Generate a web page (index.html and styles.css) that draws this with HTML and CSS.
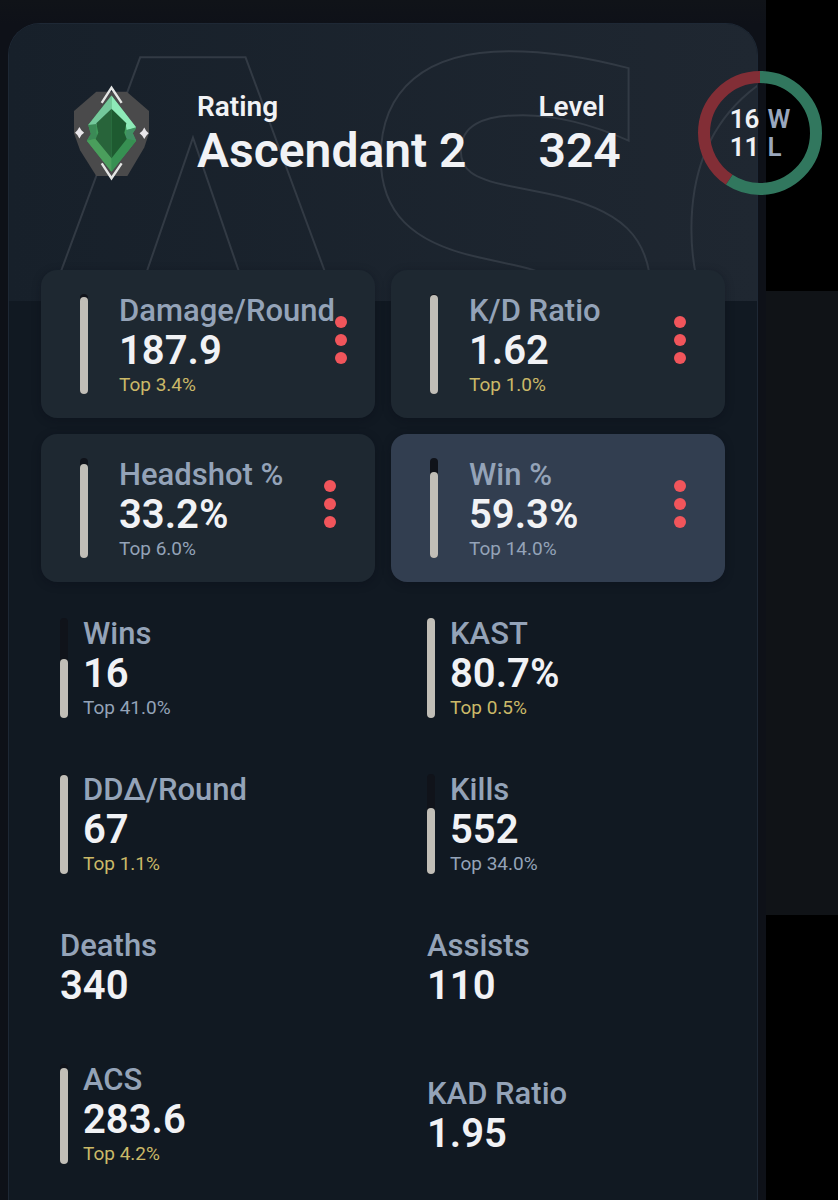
FILE: index.html
```
<!DOCTYPE html>
<html lang="en">
<head>
    <meta charset="utf-8">
    <meta name="viewport" content="width=device-width, initial-scale=1">
    <title>Player Stats</title>
    <link rel="stylesheet" href="styles.css">
</head>
<body>

<main class="profile">
    <section class="card">
        <!-- Large outlined rank name behind the header -->
        <div class="banner">
            <svg class="banner-text" width="1400" height="278" aria-hidden="true">
                <text x="2 338 659" y="376">ASC</text>
            </svg>
        </div>

        <header class="card-header">
            <svg class="rank-icon" viewBox="42 48 222 282" role="img" aria-label="Ascendant rank">
                <path fill="#4a4a4b" d="M108 67H198L264 124V190L250 232L200 316H108L60 240L42 190V124Z"/>
                <path fill="#3f9a5b" d="M153 78L226 174L216 190L226 212L153 304L80 212L92 192L84 165Z"/>
                <path fill="#74c89b" d="M153 78V120L108 167L84 165Z"/>
                <path fill="#8eeab8" d="M153 78L226 172L198 180L195 164L153 120Z"/>
                <path fill="#3b8a56" d="M84 165L108 162V188L112 205L80 212L92 192Z"/>
                <path fill="#419064" d="M198 180L226 174L216 190L226 212L194 207Z"/>
                <path fill="#4a9e5c" d="M80 212L108 205L153 262V304Z"/>
                <path fill="#379052" d="M226 212L196 205L153 262V304Z"/>
                <path fill="#28643a" d="M153 117L108 160L114 188L106 207L153 264Z"/>
                <path fill="#1e5a30" d="M153 117L197 160L191 188L198 207L153 264Z"/>
                <path fill="none" stroke="#e4e5e4" stroke-width="7" d="M124 100L153 55L183 100M124 279L153 323L183 279"/>
                <path fill="#e8e6ea" d="M58 171L64 181L72 188L64 195L58 205L52 195L45 188L52 181ZM250 173L256 183L263 190L256 197L250 207L244 197L236 190L244 183Z"/>
            </svg>
            <div class="headline">
                <span class="headline-label">Rating</span>
                <span class="headline-value">Ascendant 2</span>
            </div>
            <div class="headline">
                <span class="headline-label">Level</span>
                <span class="headline-value">324</span>
            </div>
            <div class="record">
                <svg class="record-ring" viewBox="0 0 124 124" aria-hidden="true">
                    <circle class="ring-loss" cx="62" cy="62" r="56" pathLength="27" stroke-dasharray="11 16" stroke-dashoffset="-16"/>
                    <circle class="ring-win" cx="62" cy="62" r="56" pathLength="27" stroke-dasharray="16 11"/>
                </svg>
                <div class="record-text">
                    <span>16</span><span class="unit">W</span>
                    <span>11</span><span class="unit">L</span>
                </div>
            </div>
        </header>

        <!-- Main stats -->
        <div class="tiles">
            <div class="tile">
                <div class="bar"><div class="bar-fill" style="height: 97%"></div></div>
                <div class="stat">
                    <span class="label">Damage/Round</span>
                    <span class="value">187.9</span>
                    <span class="rank gold">Top 3.4%</span>
                </div>
                <button class="menu" type="button" aria-label="Damage/Round options"><span></span><span></span><span></span></button>
            </div>
            <div class="tile">
                <div class="bar"><div class="bar-fill" style="height: 99%"></div></div>
                <div class="stat">
                    <span class="label">K/D Ratio</span>
                    <span class="value">1.62</span>
                    <span class="rank gold">Top 1.0%</span>
                </div>
                <button class="menu" type="button" aria-label="K/D Ratio options"><span></span><span></span><span></span></button>
            </div>
            <div class="tile">
                <div class="bar"><div class="bar-fill" style="height: 94%"></div></div>
                <div class="stat">
                    <span class="label">Headshot %</span>
                    <span class="value">33.2%</span>
                    <span class="rank">Top 6.0%</span>
                </div>
                <button class="menu" type="button" aria-label="Headshot % options"><span></span><span></span><span></span></button>
            </div>
            <div class="tile active">
                <div class="bar"><div class="bar-fill" style="height: 86%"></div></div>
                <div class="stat">
                    <span class="label">Win %</span>
                    <span class="value">59.3%</span>
                    <span class="rank">Top 14.0%</span>
                </div>
                <button class="menu" type="button" aria-label="Win % options"><span></span><span></span><span></span></button>
            </div>
        </div>

        <!-- Other stats -->
        <div class="stats">
            <div class="row">
                <div class="bar"><div class="bar-fill" style="height: 59%"></div></div>
                <div class="stat">
                    <span class="label">Wins</span>
                    <span class="value">16</span>
                    <span class="rank">Top 41.0%</span>
                </div>
            </div>
            <div class="row">
                <div class="bar"><div class="bar-fill" style="height: 100%"></div></div>
                <div class="stat">
                    <span class="label">KAST</span>
                    <span class="value">80.7%</span>
                    <span class="rank gold">Top 0.5%</span>
                </div>
            </div>
            <div class="row">
                <div class="bar"><div class="bar-fill" style="height: 99%"></div></div>
                <div class="stat">
                    <span class="label">DDΔ/Round</span>
                    <span class="value">67</span>
                    <span class="rank gold">Top 1.1%</span>
                </div>
            </div>
            <div class="row">
                <div class="bar"><div class="bar-fill" style="height: 66%"></div></div>
                <div class="stat">
                    <span class="label">Kills</span>
                    <span class="value">552</span>
                    <span class="rank">Top 34.0%</span>
                </div>
            </div>
            <div class="row plain">
                <div class="stat">
                    <span class="label">Deaths</span>
                    <span class="value">340</span>
                </div>
            </div>
            <div class="row plain">
                <div class="stat">
                    <span class="label">Assists</span>
                    <span class="value">110</span>
                </div>
            </div>
            <div class="row">
                <div class="bar"><div class="bar-fill" style="height: 96%"></div></div>
                <div class="stat">
                    <span class="label">ACS</span>
                    <span class="value">283.6</span>
                    <span class="rank gold">Top 4.2%</span>
                </div>
            </div>
            <div class="row">
                <div class="stat">
                    <span class="label">KAD Ratio</span>
                    <span class="value">1.95</span>
                </div>
            </div>
        </div>
    </section>
</main>

<aside class="side">
    <div class="side-panel"></div>
</aside>

</body>
</html>
```

FILE: styles.css
```
* {
    box-sizing: border-box;
}

body {
    margin: 0;
    display: flex;
    min-height: 100vh;
    overflow-x: hidden;
    font-family: Roboto, "Liberation Sans", sans-serif;
    background-color: #000;
    color: #f1f2f5;
}

.profile {
    flex: 1;
    padding: 23px 8px 0;
    background: linear-gradient(#101318, #0e1118 24px);
}

.side {
    width: 72px;
    padding-top: 291px;
}

.side-panel {
    height: 624px;
    background-color: #101317;
}

.card {
    position: relative;
    min-height: calc(100vh - 23px);
    padding: 0 32px 24px;
    border: 1px solid #1e2835;
    border-bottom: none;
    border-radius: 32px 32px 0 0;
    background-color: #111922;
}

/* Header */
.banner {
    position: absolute;
    top: 0;
    left: 0;
    right: 0;
    height: 277px;
    overflow: hidden;
    border-radius: 31px 31px 0 0;
    background: linear-gradient(90deg, #17202a, #1f2731);
}

.banner-text text {
    font-family: "DejaVu Sans", sans-serif;
    font-size: 470px;
    font-weight: bold;
    fill: none;
    stroke: #323a44;
    stroke-width: 2px;
}

.card-header {
    position: relative;
    display: flex;
    align-items: center;
    gap: 48px;
    height: 246px;
    padding: 0 0 28px 33px;
}

.rank-icon {
    width: 75px;
    height: 96px;
}

.headline {
    display: flex;
    flex-direction: column;
    margin-right: 24px;
    padding-top: 4px;
    white-space: nowrap;
}

.headline-label {
    font-size: 28px;
    font-weight: 600;
    line-height: 32px;
}

.headline-value {
    font-size: 48px;
    font-weight: 600;
    line-height: 56px;
}

.record {
    position: absolute;
    top: 47px;
    right: -97px;
    width: 124px;
    height: 124px;
    display: grid;
    place-items: center;
}

.record-ring {
    position: absolute;
    width: 124px;
    height: 124px;
    transform: rotate(-90deg);
}

.record-ring circle {
    fill: none;
    stroke-width: 12px;
}

.ring-win {
    stroke: #31775e;
}

.ring-loss {
    stroke: #822e36;
}

.record-text {
    display: grid;
    grid-template-columns: auto auto;
    column-gap: 8px;
    font-size: 26px;
    font-weight: 600;
    line-height: 28px;
}

.unit {
    color: #9aa7bd;
}

/* Stats */
.tiles {
    position: relative;
    display: grid;
    grid-template-columns: 1fr 1fr;
    gap: 16px;
}

.tile {
    display: flex;
    align-items: center;
    min-width: 0;
    height: 148px;
    padding: 0 39px;
    border-radius: 16px;
    background-color: #1e2831;
    box-shadow: 0 2px 8px rgba(8, 12, 24, 0.35);
}

.tile.active {
    background-color: #323e50;
}

.bar {
    flex: none;
    display: flex;
    align-items: flex-end;
    width: 8px;
    height: 100px;
    border-radius: 4px;
    background-color: #10131a;
}

.bar-fill {
    width: 100%;
    border-radius: 4px;
    background-color: #c1beb7;
}

.stat {
    display: flex;
    flex-direction: column;
    white-space: nowrap;
}

.tile .stat {
    margin-left: 31px;
    padding-top: 2px;
}

.label {
    font-size: 31px;
    font-weight: 500;
    line-height: 40px;
    color: #94a3b8;
}

.value {
    font-size: 40px;
    font-weight: 600;
    line-height: 40px;
}

.rank {
    font-size: 19px;
    line-height: 28px;
    color: #94a3b8;
}

.rank.gold {
    color: #cbb968;
}

.menu {
    flex: none;
    display: flex;
    flex-direction: column;
    gap: 6px;
    margin-left: auto;
    padding: 0 0 8px;
    border: none;
    background: none;
    cursor: pointer;
}

.menu span {
    width: 12px;
    height: 12px;
    border-radius: 50%;
    background-color: #f1555b;
}

.stats {
    display: grid;
    grid-template-columns: 1fr 1fr;
    gap: 48px 88px;
    padding: 32px 19px 0;
}

.row {
    display: flex;
    align-items: center;
    gap: 15px;
}

.row.plain {
    align-items: flex-start;
    min-height: 86px;
}
```
